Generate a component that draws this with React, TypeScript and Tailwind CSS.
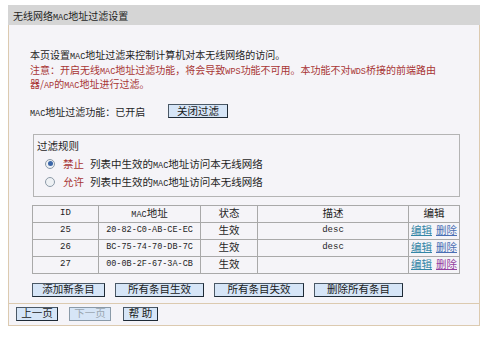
import React from "react";

const cjk = { fontFamily: '"Noto Sans CJK SC", "Liberation Sans", sans-serif' };
const mono = { fontFamily: '"Liberation Mono", "Noto Sans CJK SC", monospace' };

function L({ children }: { children: React.ReactNode }) {
  return (
    <span className="text-[8.5px] leading-none" style={mono}>
      {children}
    </span>
  );
}

function Btn({ children, w, disabled }: { children: React.ReactNode; w: number; disabled?: boolean }) {
  return (
    <div
      style={{ width: w }}
      className={
        "h-[14px] flex items-center justify-center text-[10.5px] leading-none bg-[#d6e5f7] border " +
        (disabled
          ? "border-[#8a9aa8] text-[#9aa6b0]"
          : "border-t-[#4a5866] border-l-[#4a5866] border-r-[#1e2a36] border-b-[#1e2a36] text-[#1a1a1a]")
      }
    >
      {children}
    </div>
  );
}

function Radio({ checked }: { checked?: boolean }) {
  return (
    <div className="w-[10px] h-[10px] rounded-full border border-[#8c9aa8] bg-[#eef1f4] flex items-center justify-center">
      {checked && <div className="w-[5px] h-[5px] rounded-full bg-[#3b66a8]" />}
    </div>
  );
}

const rows = [
  { id: "25", mac: "20-82-C0-AB-CE-EC", desc: "desc", visited: false },
  { id: "26", mac: "BC-75-74-70-DB-7C", desc: "desc", visited: false },
  { id: "27", mac: "00-0B-2F-67-3A-CB", desc: "", visited: true },
];

export default function App() {
  return (
    <div className="w-[500px] h-[341px] bg-white overflow-hidden text-[#1e1e1e]" style={cjk}>
      <div className="ml-[8px] mt-[5px] w-[472px]">
        <div className="h-[20px] bg-[#d5d5d5] flex items-center pl-[5px] text-[10px]">
          <span>无线网络<L>MAC</L>地址过滤设置</span>
        </div>
        <div className="bg-[#f5f4f8] border-l border-r border-b border-[#dccab0] pb-[4px]">
          <div className="pl-[21px] pt-[23px] text-[10px] leading-[14px] whitespace-nowrap">
            <div className="h-[14.5px]">本页设置<L>MAC</L>地址过滤来控制计算机对本无线网络的访问。</div>
            <div className="text-[#a83434]">
              <div className="h-[14.5px]">注意：开启无线<L>MAC</L>地址过滤功能，将会导致<L>WPS</L>功能不可用。本功能不对<L>WDS</L>桥接的前端路由</div>
              <div className="h-[14.5px]">器/<L>AP</L>的<L>MAC</L>地址进行过滤。</div>
            </div>
          </div>
          <div className="flex items-center pl-[21px] mt-[12px] h-[15px] text-[10px]">
            <div className="w-[138px]"><L>MAC</L>地址过滤功能：已开启</div>
            <Btn w={60}>关闭过滤</Btn>
          </div>
          <div className="ml-[24px] mt-[15px] w-[427px] h-[63px] border border-[#b4b4b4] pl-[2px] pt-[3px] text-[10.5px]">
            <div className="leading-[16px] pl-[1px]">过滤规则</div>
            <div className="flex items-center mt-[1px] h-[18px] pl-[9px]">
              <Radio checked />
              <span className="ml-[8px] text-[#a83434]">禁止</span>
              <span className="ml-[6px]">列表中生效的<L>MAC</L>地址访问本无线网络</span>
            </div>
            <div className="flex items-center h-[18px] pl-[9px]">
              <Radio />
              <span className="ml-[8px] text-[#a83434]">允许</span>
              <span className="ml-[6px]">列表中生效的<L>MAC</L>地址访问本无线网络</span>
            </div>
          </div>
          <table className="ml-[23px] mt-[8px] w-[427px] border-collapse text-[10.5px] table-fixed">
            <colgroup>
              <col style={{ width: 66 }} />
              <col style={{ width: 102 }} />
              <col style={{ width: 57 }} />
              <col style={{ width: 151 }} />
              <col style={{ width: 51 }} />
            </colgroup>
            <thead>
              <tr className="h-[17px]">
                <th className="border border-[#a9a9a9] font-normal text-[9px] leading-none" style={mono}>ID</th>
                <th className="border border-[#a9a9a9] font-normal leading-none"><L>MAC</L>地址</th>
                <th className="border border-[#a9a9a9] font-normal leading-none">状态</th>
                <th className="border border-[#a9a9a9] font-normal leading-none">描述</th>
                <th className="border border-[#a9a9a9] font-normal leading-none">编辑</th>
              </tr>
            </thead>
            <tbody>
              {rows.map((r) => (
                <tr key={r.id} className="h-[17px]">
                  <td className="border border-[#a9a9a9] text-center text-[9px] leading-none" style={mono}>{r.id}</td>
                  <td className="border border-[#a9a9a9] text-center text-[8.5px] leading-none" style={mono}>{r.mac}</td>
                  <td className="border border-[#a9a9a9] text-center leading-none">生效</td>
                  <td className="border border-[#a9a9a9] text-center text-[9px] leading-none" style={mono}>{r.desc}</td>
                  <td className="border border-[#a9a9a9] text-center leading-none whitespace-nowrap">
                    <span className="underline text-[#3386a6]">编辑</span>
                    <span className={"underline ml-[4px] " + (r.visited ? "text-[#9440a0]" : "text-[#4a6fb4]")}>删除</span>
                  </td>
                </tr>
              ))}
            </tbody>
          </table>
          <div className="flex ml-[23px] mt-[9px] gap-[10px]">
            <Btn w={73}>添加新条目</Btn>
            <Btn w={89}>所有条目生效</Btn>
            <Btn w={90}>所有条目失效</Btn>
            <Btn w={89}>删除所有条目</Btn>
          </div>
          <div className="mt-[6px] border-t border-[#dccab0]" />
          <div className="flex ml-[7px] mt-[3px]">
            <Btn w={42}>上一页</Btn>
            <div className="ml-[11px]">
              <Btn w={42} disabled>下一页</Btn>
            </div>
            <div className="ml-[12px]">
              <Btn w={35}>帮&nbsp;助</Btn>
            </div>
          </div>
        </div>
      </div>
    </div>
  );
}
